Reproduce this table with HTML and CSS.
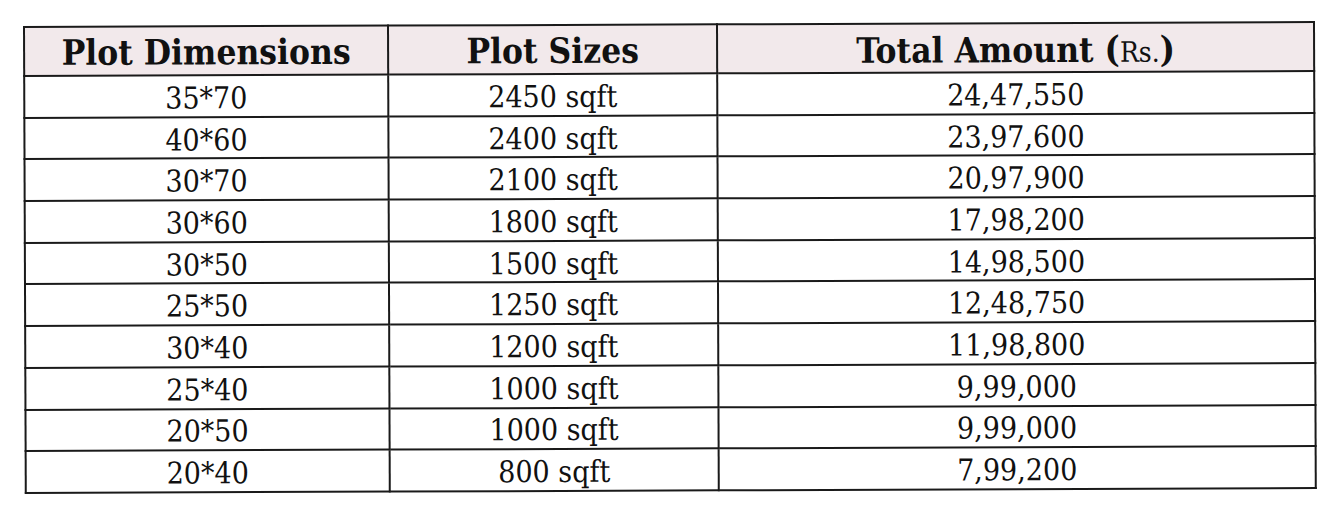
FILE: index.html
```html
<!DOCTYPE html>
<html>
<head>
<meta charset="utf-8">
<link rel="stylesheet" href="styles.css">
</head>
<body>
<div class="page">
  <table class="plots">
    <colgroup>
      <col class="c1"><col class="c2"><col class="c3">
    </colgroup>
    <thead>
      <tr><th>Plot Dimensions</th><th>Plot Sizes</th><th>Total Amount <span class="rs"><span class="paren">(</span>Rs.<span class="paren">)</span></span></th></tr>
    </thead>
    <tbody>
      <tr><td>35*70</td><td>2450 sqft</td><td>24,47,550</td></tr>
      <tr><td>40*60</td><td>2400 sqft</td><td>23,97,600</td></tr>
      <tr><td>30*70</td><td>2100 sqft</td><td>20,97,900</td></tr>
      <tr><td>30*60</td><td>1800 sqft</td><td>17,98,200</td></tr>
      <tr><td>30*50</td><td>1500 sqft</td><td>14,98,500</td></tr>
      <tr><td>25*50</td><td>1250 sqft</td><td>12,48,750</td></tr>
      <tr><td>30*40</td><td>1200 sqft</td><td>11,98,800</td></tr>
      <tr><td>25*40</td><td>1000 sqft</td><td>9,99,000</td></tr>
      <tr><td>20*50</td><td>1000 sqft</td><td>9,99,000</td></tr>
      <tr><td>20*40</td><td>800 sqft</td><td>7,99,200</td></tr>
    </tbody>
  </table>
</div>
</body>
</html>
```
FILE: styles.css
```css
html, body {
  margin: 0;
  padding: 0;
  background: #ffffff;
}
.page {
  width: 1336px;
  height: 509px;
  padding: 26px 0 0 23px;
  box-sizing: border-box;
  overflow: hidden;
}
.plots {
  border-collapse: collapse;
  width: 1290px;
  table-layout: fixed;
  font-family: "DejaVu Serif Condensed", "DejaVu Serif", serif;
  font-stretch: condensed;
  color: #111111;
  transform: rotate(-0.22deg);
  transform-origin: left top;
  border: 2px solid #1a1a1a;
}
.c1 { width: 364px; }
.c2 { width: 329px; }
.c3 { width: 597px; }
.plots th, .plots td {
  border: 2px solid #1a1a1a;
  text-align: center;
  padding: 0;
  line-height: 1;
}
.plots th {
  height: 45px;
  background: #f2e9eb;
  font-size: 35px;
  font-weight: bold;
  vertical-align: middle;
  padding-top: 2px;
}
.plots .rs {
  font-size: 28px;
  font-weight: normal;
}
.plots .paren {
  font-size: 36px;
  font-weight: bold;
}
.plots td {
  height: 35.7px;
  font-size: 30px;
  font-weight: normal;
  vertical-align: middle;
  padding-top: 4px;
}
```
